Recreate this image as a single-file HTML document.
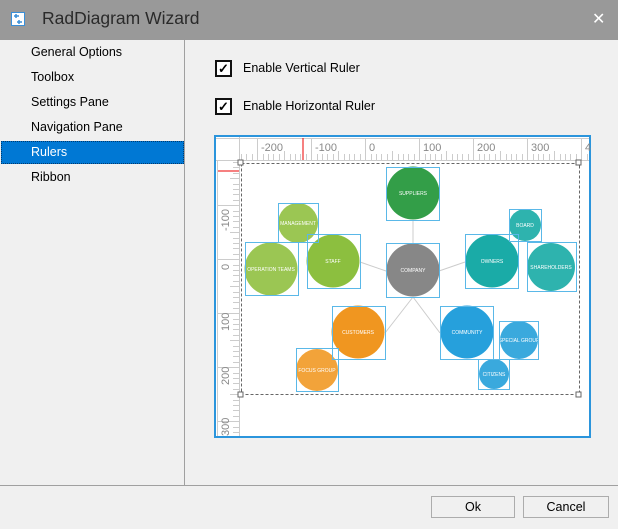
<!DOCTYPE html>
<html><head><meta charset="utf-8"><style>
*{margin:0;padding:0;box-sizing:border-box}
body{width:618px;height:529px;background:#f0f0f0;font-family:"Segoe UI","Liberation Sans",sans-serif;position:relative;overflow:hidden;color:#000}
.title{position:absolute;left:0;top:0;width:618px;height:40px;background:#999}
.title .t{position:absolute;left:42px;top:8px;font-size:17.5px;color:#2a2a2a}
.title .x{position:absolute;left:592px;top:9px;font-size:16px;color:#fff}
.nav{position:absolute;left:31px;font-size:12.5px;top:0}
.sel{position:absolute;left:1px;top:141px;width:183px;height:23px;background:#0078d4;border:1px dotted #003a6e}
.vd{position:absolute;left:184px;top:40px;width:1px;height:445px;background:#a0a0a0}
.hd{position:absolute;left:0;top:485px;width:618px;height:1px;background:#a0a0a0}
.cb{position:absolute;left:215px;width:17px;height:17px;border:2px solid #111;background:#fff;font-size:13px;line-height:13px;text-align:center;font-weight:bold}
.cl{position:absolute;left:243px;font-size:12.5px}
.btn{position:absolute;top:496px;height:22px;border:1px solid #acacac;background:#f0f0f0;font-size:12.5px;text-align:center;line-height:20px}
</style></head><body>
<div class="title">
<svg style="position:absolute;left:11px;top:12px" width="14" height="14"><rect x="0.5" y="0.5" width="13" height="13" fill="#fff" stroke="#3a8fd8"/><path d="M3 4h5M5 2v4M6 10h5M8 8v4" stroke="#3a8fd8" stroke-width="1.5"/></svg>
<div class="t">RadDiagram Wizard</div><div class="x">✕</div></div>
<div class="sel"></div>
<div class="nav" style="top:45px">General Options</div>
<div class="nav" style="top:70px">Toolbox</div>
<div class="nav" style="top:95px">Settings Pane</div>
<div class="nav" style="top:120px">Navigation Pane</div>
<div class="nav" style="top:145px;color:#fff">Rulers</div>
<div class="nav" style="top:170px">Ribbon</div>
<div class="vd"></div><div class="hd"></div>
<div class="cb" style="top:60px">✓</div><div class="cl" style="top:61px">Enable Vertical Ruler</div>
<div class="cb" style="top:98px">✓</div><div class="cl" style="top:99px">Enable Horizontal Ruler</div>
<div class="btn" style="left:431px;width:84px">Ok</div>
<div class="btn" style="left:523px;width:86px">Cancel</div>
<svg style="position:absolute;left:0;top:0" width="618" height="529" font-family="Liberation Sans,sans-serif">
<rect x="215" y="136" width="375" height="301" fill="#fff" stroke="#2b95dc" stroke-width="2"/>
<g stroke="#ccc" stroke-width="1">
<line x1="216" y1="160.5" x2="589" y2="160.5"/><line x1="239.5" y1="137" x2="239.5" y2="436"/>
<line x1="216" y1="138.5" x2="589" y2="138.5"/><line x1="217.5" y1="160" x2="217.5" y2="436"/>
</g>
<g id="tt" stroke="#ccc"></g>
<g font-size="11" fill="#888">
<text x="261" y="151">-200</text><text x="315" y="151">-100</text><text x="369" y="151">0</text><text x="423" y="151">100</text><text x="477" y="151">200</text><text x="531" y="151">300</text><text x="585" y="151">4</text>
<g transform="rotate(-90)"><text x="-231" y="229">-100</text><text x="-270" y="229">0</text><text x="-331" y="229">100</text><text x="-385" y="229">200</text><text x="-436" y="229">300</text></g>
</g>
<line x1="303" y1="138" x2="303" y2="160" stroke="#e00"/><line x1="218" y1="171" x2="239" y2="171" stroke="#e00"/>
<rect x="241.5" y="163.5" width="338" height="231" fill="none" stroke="#666" stroke-dasharray="3,2"/>
<g fill="#fff" stroke="#666"><rect x="238" y="160" width="5" height="5"/><rect x="576" y="160" width="5" height="5"/><rect x="238" y="392" width="5" height="5"/><rect x="576" y="392" width="5" height="5"/></g>
<g stroke="#ccc"><line x1="413" y1="220" x2="413" y2="243"/><line x1="360" y1="262" x2="386" y2="271"/><line x1="465" y1="262" x2="439" y2="271"/><line x1="413" y1="297" x2="385" y2="333"/><line x1="413" y1="297" x2="440" y2="333"/></g>
<g font-size="5" fill="#fff" text-anchor="middle">
<circle cx="413" cy="193" r="26.5" fill="#339e48"/><text x="413" y="195">SUPPLIERS</text>
<circle cx="298" cy="223" r="20" fill="#9bc653"/><text x="298" y="225">MANAGEMENT</text>
<circle cx="271" cy="269" r="26.5" fill="#9bc653"/><text x="271" y="271">OPERATION TEAMS</text>
<circle cx="333" cy="261" r="26.5" fill="#8cbf3f"/><text x="333" y="263">STAFF</text>
<circle cx="413" cy="270" r="26.5" fill="#878787"/><text x="413" y="272">COMPANY</text>
<circle cx="492" cy="261" r="26.5" fill="#1aaba7"/><text x="492" y="263">OWNERS</text>
<circle cx="525" cy="225" r="16" fill="#2eb3ae"/><text x="525" y="227">BOARD</text>
<circle cx="551" cy="267" r="24" fill="#2eb3ae"/><text x="551" y="269">SHAREHOLDERS</text>
<circle cx="358" cy="332" r="26.5" fill="#f09620"/><text x="358" y="334">CUSTOMERS</text>
<circle cx="317" cy="370" r="21" fill="#f2a33a"/><text x="317" y="372">FOCUS GROUP</text>
<circle cx="467" cy="332" r="26.5" fill="#26a0dc"/><text x="467" y="334">COMMUNITY</text>
<circle cx="519" cy="340" r="19" fill="#3aa9dd"/><text x="519" y="342">SPECIAL GROUP</text>
<circle cx="494" cy="374" r="15" fill="#3aa9dd"/><text x="494" y="376">CITIZENS</text>
</g>
<g fill="none" stroke="#5ab8e8" stroke-width="1">
<rect x="386.5" y="167.5" width="53" height="53"/><rect x="278.5" y="203.5" width="40" height="39"/><rect x="245.5" y="242.5" width="53" height="53"/><rect x="307.5" y="234.5" width="53" height="54"/><rect x="386.5" y="243.5" width="53" height="54"/><rect x="465.5" y="234.5" width="53" height="54"/><rect x="509.5" y="209.5" width="32" height="32"/><rect x="527.5" y="242.5" width="49" height="49"/><rect x="332.5" y="306.5" width="53" height="53"/><rect x="296.5" y="348.5" width="42" height="43"/><rect x="440.5" y="306.5" width="53" height="53"/><rect x="499.5" y="321.5" width="39" height="38"/><rect x="478.5" y="359.5" width="31" height="30"/>
</g>
</svg>
<script>
var g=document.getElementById('tt'),s='';
for(var i=0;i<70;i++){var x=241+i*5.4;if(x>589)break;var m=(i%10==3);var h=m?22:(i%5==3?9:6);s+='<line x1="'+(Math.round(x)+.5)+'" y1="'+(160-h)+'" x2="'+(Math.round(x)+.5)+'" y2="160"/>';}
for(var i=0;i<60;i++){var y=162+i*5.4;if(y>436)break;var m=(i%10==8);var h=m?22:(i%5==3?9:6);s+='<line y1="'+(Math.round(y)+.5)+'" x1="'+(239-h)+'" y2="'+(Math.round(y)+.5)+'" x2="239"/>';}
g.innerHTML=s;
</script>
</body></html>
